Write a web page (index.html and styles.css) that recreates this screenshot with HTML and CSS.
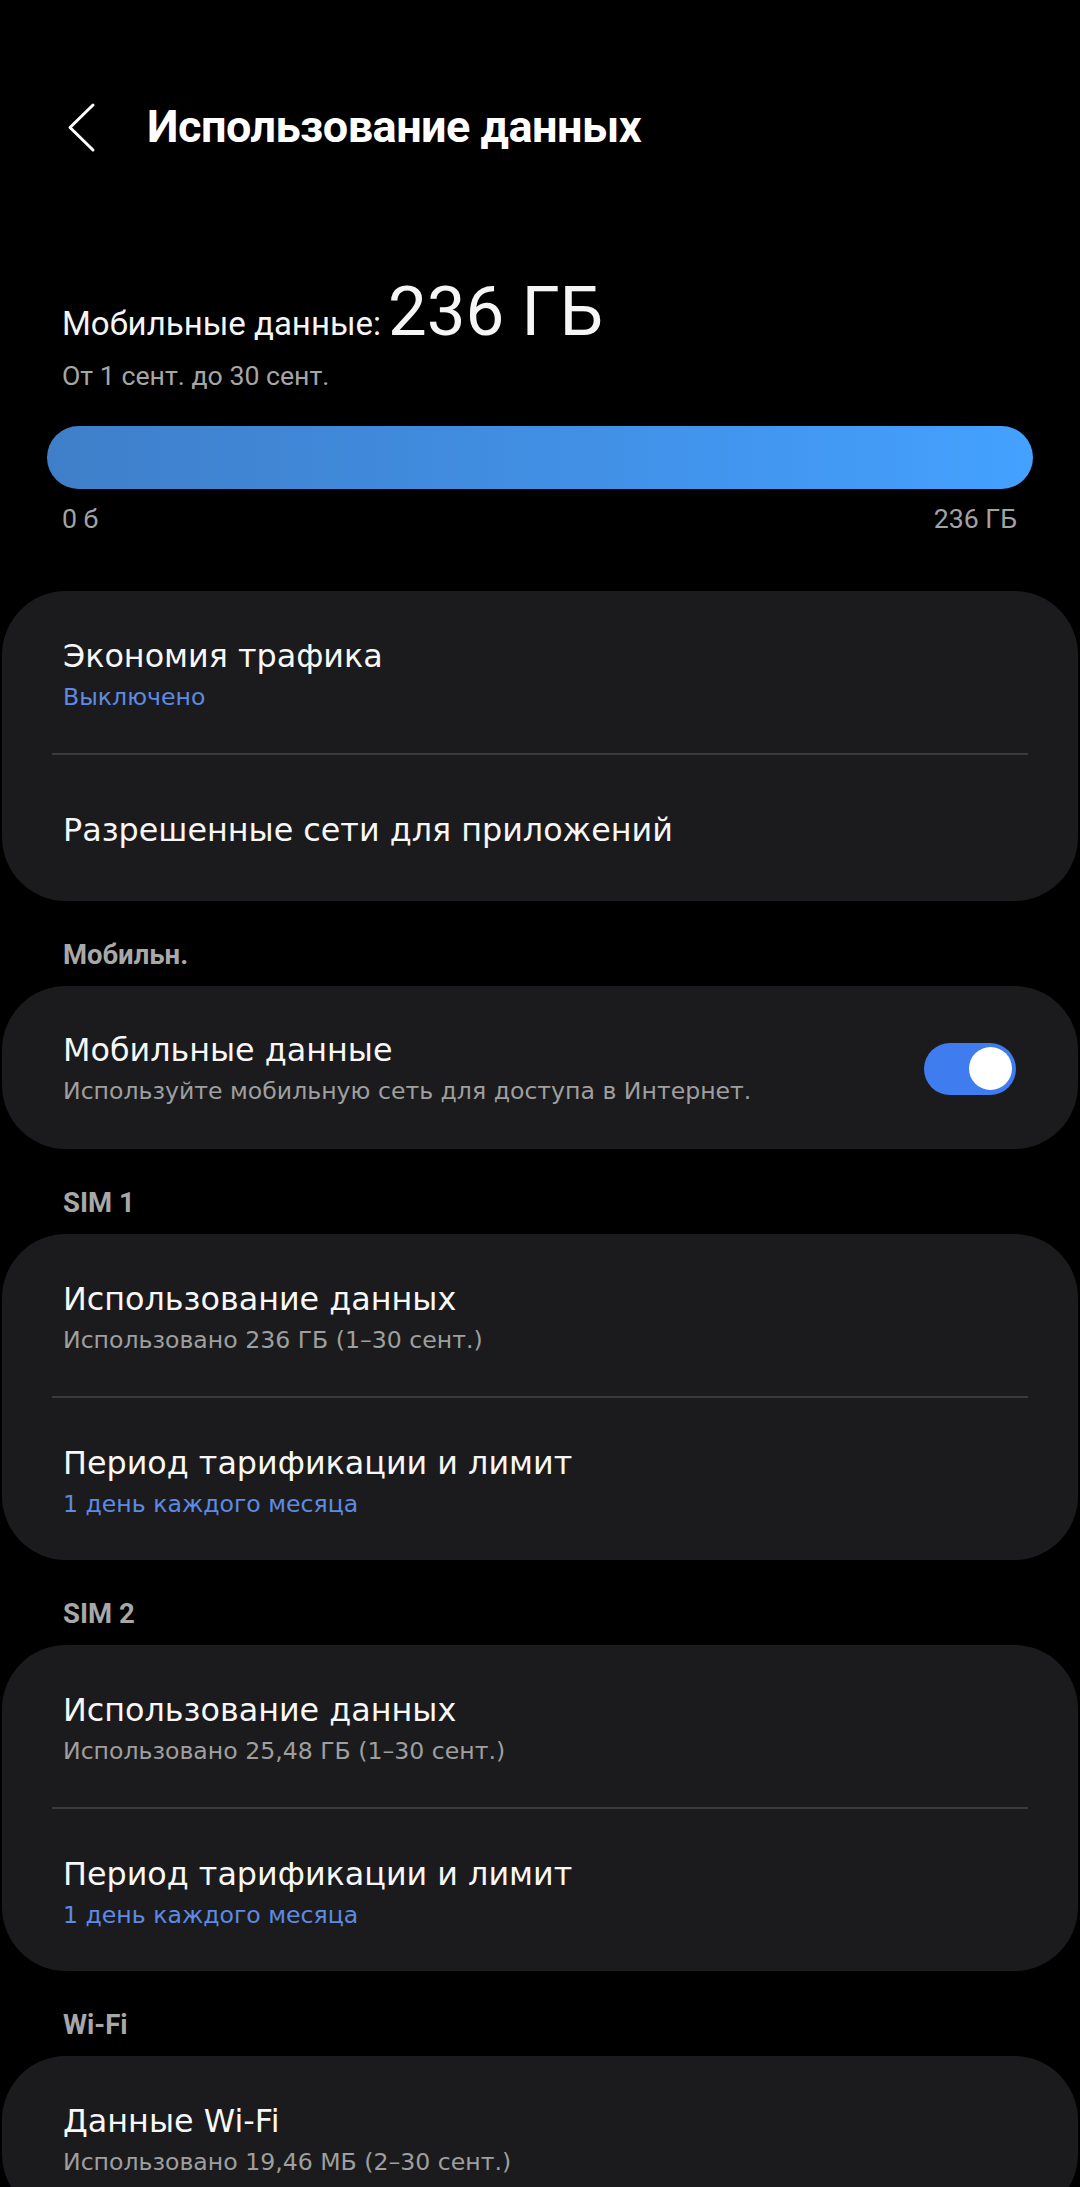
FILE: index.html
```html
<!DOCTYPE html>
<html lang="ru">
<head>
  <meta charset="UTF-8">
  <title>Использование данных</title>
  <link rel="stylesheet" href="styles.css">
</head>
<body>
  <div class="topbar">
    <div class="back">
      <svg viewBox="0 0 60 72" width="60" height="72">
        <polyline points="43,14 20,36.5 43,59" fill="none" stroke="#fff" stroke-width="3" stroke-linecap="round" stroke-linejoin="round"/>
      </svg>
    </div>
    <h1>Использование данных</h1>
  </div>

  <div class="usage">
    <div class="usage-head"><span class="usage-label">Мобильные данные:</span> <span class="usage-total">236 ГБ</span></div>
    <div class="usage-period">От 1 сент. до 30 сент.</div>
  </div>
  <div class="bar"></div>
  <div class="bar-scale">
    <span>0 б</span>
    <span>236 ГБ</span>
  </div>

  <div class="card">
    <div class="row">
      <div class="row-title">Экономия трафика</div>
      <div class="row-sub blue">Выключено</div>
    </div>
    <div class="row single">
      <div class="row-title">Разрешенные сети для приложений</div>
    </div>
  </div>

  <div class="section">Мобильн.</div>
  <div class="card">
    <div class="row switch-row">
      <div class="row-text">
        <div class="row-title">Мобильные данные</div>
        <div class="row-sub">Используйте мобильную сеть для доступа в Интернет.</div>
      </div>
      <div class="toggle"><span class="thumb"></span></div>
    </div>
  </div>

  <div class="section">SIM 1</div>
  <div class="card">
    <div class="row">
      <div class="row-title">Использование данных</div>
      <div class="row-sub">Использовано 236 ГБ (1–30 сент.)</div>
    </div>
    <div class="row">
      <div class="row-title">Период тарификации и лимит</div>
      <div class="row-sub blue">1 день каждого месяца</div>
    </div>
  </div>

  <div class="section">SIM 2</div>
  <div class="card">
    <div class="row">
      <div class="row-title">Использование данных</div>
      <div class="row-sub">Использовано 25,48 ГБ (1–30 сент.)</div>
    </div>
    <div class="row">
      <div class="row-title">Период тарификации и лимит</div>
      <div class="row-sub blue">1 день каждого месяца</div>
    </div>
  </div>

  <div class="section">Wi-Fi</div>
  <div class="card">
    <div class="row">
      <div class="row-title">Данные Wi-Fi</div>
      <div class="row-sub">Использовано 19,46 МБ (2–30 сент.)</div>
    </div>
  </div>
</body>
</html>
```

FILE: styles.css
```css
body {
  margin: 0;
  background: #000;
  color: #f5f5f5;
  font-family: Roboto, "Liberation Sans", sans-serif;
  width: 1080px;
  overflow: hidden;
}

/* top bar */
.topbar {
  display: flex;
  align-items: center;
  height: 72px;
  margin-top: 91px;
}

.back {
  width: 60px;
  height: 72px;
  margin-left: 50px;
}

.back svg {
  display: block;
}

h1 {
  margin: 0 0 0 37px;
  font-size: 45px;
  line-height: 46px;
  letter-spacing: -0.5px;
  font-weight: 700;
  color: #fff;
}

/* usage summary */
.usage {
  padding: 116px 60px 0 62px;
}

.usage-head {
  line-height: 66px;
  height: 66px;
}

.usage-label {
  font-size: 33px;
  line-height: 33px;
}

.usage-total {
  margin-left: 3px;
  font-size: 69px;
  font-weight: 400;
}

.usage-period {
  margin-top: 18px;
  font-size: 26.7px;
  line-height: 26px;
  color: #a6a6a6;
}

.bar {
  height: 63px;
  margin: 37px 47px 0;
  border-radius: 32px;
  background: linear-gradient(90deg, #3f7fc9 0%, #4190e6 55%, #44a1ff 100%);
}

.bar-scale {
  display: flex;
  justify-content: space-between;
  margin: 17px 63px 0 62px;
  font-size: 26.7px;
  line-height: 26px;
  color: #a3a3a3;
}

/* cards */
.card {
  margin: 0 2px;
  background: #1b1b1d;
  border-radius: 64px;
  overflow: hidden;
}

.bar-scale + .card {
  margin-top: 59px;
}

.row {
  position: relative;
  padding: 46px 60px 41px 61px;
  font-family: "DejaVu Sans", sans-serif;
}

.row + .row {
  border-top: 2px solid transparent;
}

.row + .row::before {
  content: "";
  position: absolute;
  top: -2px;
  left: 50px;
  right: 50px;
  height: 2px;
  background: #3a3a3c;
}

.row.single {
  padding-top: 56px;
  padding-bottom: 52px;
}

.row-title {
  font-size: 31.8px;
  line-height: 38px;
  color: #f7f7f7;
}

.row-sub {
  margin-top: 7px;
  font-size: 23.6px;
  line-height: 30px;
  color: #9f9f9f;
}

.row-sub.blue {
  color: #5d8ae3;
}

.switch-row {
  display: flex;
  align-items: center;
  justify-content: space-between;
  padding-top: 45px;
  padding-bottom: 43px;
  padding-right: 62px;
}

.toggle {
  display: flex;
  justify-content: flex-end;
  align-items: center;
  width: 92px;
  height: 52px;
  padding: 0 4px;
  box-sizing: border-box;
  border-radius: 26px;
  background: #3e7cf0;
}

.thumb {
  width: 43px;
  height: 43px;
  border-radius: 50%;
  background: #fff;
}

/* section captions */
.section {
  padding: 41px 62px 18px 63px;
  font-size: 27.5px;
  line-height: 26px;
  font-weight: 700;
  color: #a8a8a8;
}
```
